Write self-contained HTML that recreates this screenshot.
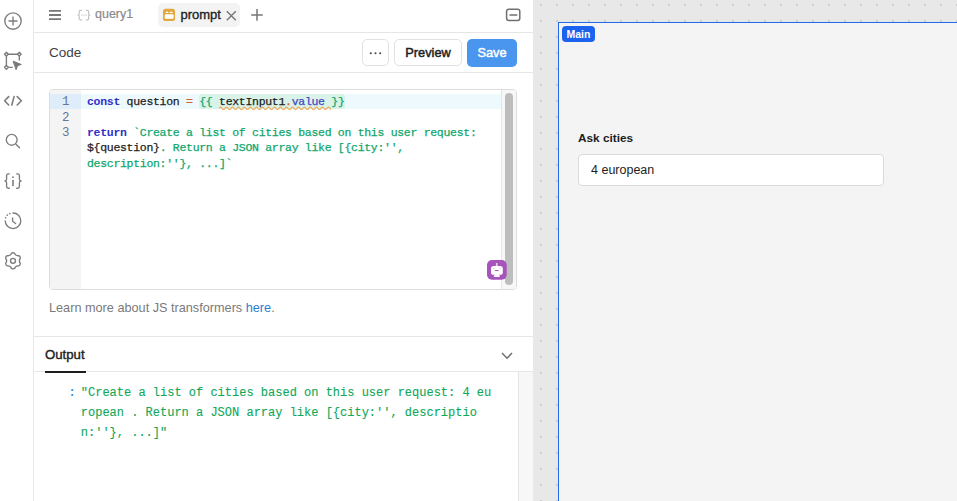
<!DOCTYPE html>
<html><head><meta charset="utf-8">
<style>
*{box-sizing:border-box;margin:0;padding:0}
html,body{width:957px;height:501px;overflow:hidden;background:#fff;font-family:"Liberation Sans",sans-serif;color:#1d1d1d}
.abs{position:absolute}
svg{position:absolute;overflow:visible}
#side{left:0;top:0;width:34px;height:501px;border-right:1px solid #e6e6e6;background:#fff}
#panel{left:34px;top:0;width:499px;height:501px;background:#fff}
#canvas{left:533px;top:0;width:424px;height:501px;background-color:#e8e8e8;
 background-image:radial-gradient(circle at 8px 5px,#cdcdcd 0.9px,transparent 1.3px);background-size:16px 16px;background-position:0 0}
.mono{font-family:"Liberation Mono",monospace}
.code{position:absolute;left:53px;font-family:"Liberation Mono",monospace;font-size:11.5px;letter-spacing:-0.3px;line-height:15.5px;white-space:pre;color:#1d1d1d;-webkit-text-stroke:0.25px currentColor}
.kw{color:#3030c8;font-weight:bold;-webkit-text-stroke:0}
.op{color:#d2622a}
.str{color:#0ea66c}
.tpl{color:#0ea66c}
.prop{color:#4646c4}
.out{position:absolute;font-family:"Liberation Mono",monospace;font-size:12px;line-height:20px;white-space:pre;color:#10a858;-webkit-text-stroke:0.12px currentColor}
</style></head><body>
<div id="side" class="abs">
  <svg width="34" height="280" style="left:0;top:0" fill="none" stroke="#7c7c7c" stroke-width="1.35" stroke-linecap="round" stroke-linejoin="round">
    <!-- plus circle -->
    <circle cx="13" cy="21" r="8.2"/>
    <path d="M9 21H17M13 17V25"/>
    <!-- select area -->
    <path d="M6.4 54.2H19.3M6.4 54.2V67.3M19.3 54.2V60M6.4 67.3H12.3"/>
    <path d="M6.4 52.3L8.3 54.2L6.4 56.1L4.5 54.2Z" fill="#fff"/>
    <path d="M19.3 52.3L21.2 54.2L19.3 56.1L17.4 54.2Z" fill="#fff"/>
    <path d="M6.4 65.4L8.3 67.3L6.4 69.2L4.5 67.3Z" fill="#fff"/>
    <path d="M13.4 61.3L21.3 64.5L17.6 65.6L16.2 69.4Z" fill="#777" stroke-width="1"/>
    <!-- code -->
    <path d="M8.7 96.6L4.6 100.8L8.7 105M14.1 96.6L11.8 105M17.2 96.6L21.3 100.8L17.2 105" stroke-width="1.6"/>
    <!-- search -->
    <circle cx="11.7" cy="139.8" r="5.4"/>
    <path d="M16 144.2L19.5 147.7"/>
    <!-- {i} -->
    <path d="M9.3 173.8H8.3C7.2 173.8 6.6 174.4 6.6 175.5V179.3C6.6 180.2 6 180.8 4.9 181C6 181.2 6.6 181.8 6.6 182.7V186.5C6.6 187.6 7.2 188.2 8.3 188.2H9.3"/>
    <path d="M16.7 173.8H17.7C18.8 173.8 19.4 174.4 19.4 175.5V179.3C19.4 180.2 20 180.8 21.1 181C20 181.2 19.4 181.8 19.4 182.7V186.5C19.4 187.6 18.8 188.2 17.7 188.2H16.7"/>
    <path d="M13 180.5V185.5" stroke-width="1.6"/>
    <circle cx="13" cy="177.2" r="0.9" fill="#777" stroke="none"/>
    <!-- history -->
    <path d="M13 213A7.8 7.8 0 1 1 5.2 220.8"/>
    <path d="M5.6 217.8L5.7 217.6M7.2 215.2L7.4 215M9.7 213.6L9.9 213.5" stroke-width="1.5"/>
    <path d="M12.6 218V221.3L15.6 223.5"/>
    <!-- gear -->
    <path d="M11.53 253.15 Q13.00 252.30 14.47 253.15 Q15.68 256.16 18.89 255.70 Q20.36 256.55 20.36 258.25 Q18.36 260.80 20.36 263.35 Q20.36 265.05 18.89 265.90 Q15.68 265.44 14.47 268.45 Q13.00 269.30 11.53 268.45 Q10.32 265.44 7.11 265.90 Q5.64 265.05 5.64 263.35 Q7.64 260.80 5.64 258.25 Q5.64 256.55 7.11 255.70 Q10.32 256.16 11.53 253.15Z"/>
    <circle cx="13" cy="260.8" r="2.5"/>
  </svg>
</div>
<div id="panel" class="abs">
  <!-- tabs row -->
  <svg width="499" height="32" style="left:0;top:0" fill="none" stroke="#6f6f6f" stroke-width="1.5" stroke-linecap="round">
    <path d="M15 10.8H27M15 15H27M15 19.2H27" stroke-linecap="butt" stroke-width="1.8" stroke="#777"/>
    <!-- query icon -->
    <g stroke="#c4c4c4" stroke-width="1.2">
      <path d="M47.6 10.3H46.4C45.6 10.3 45.2 10.7 45.2 11.5V13.9C45.2 14.5 44.8 15 43.6 15.1C44.8 15.2 45.2 15.7 45.2 16.3V18.7C45.2 19.5 45.6 19.9 46.4 19.9H47.6"/>
      <path d="M52.2 10.3H53.4C54.2 10.3 54.6 10.7 54.6 11.5V13.9C54.6 14.5 55 15 56.2 15.1C55 15.2 54.6 15.7 54.6 16.3V18.7C54.6 19.5 54.2 19.9 53.4 19.9H52.2"/>
      <path d="M47.8 15.1H47.9M50 15.1H50.1M52.2 15.1H52.3" stroke-width="1.4"/>
    </g>
    <!-- minimize -->
    <rect x="472.6" y="9.3" width="13.2" height="11.2" rx="2.2" stroke="#707070" stroke-width="1.5"/>
    <path d="M476 15H482.8" stroke="#707070" stroke-width="1.5"/>
  </svg>
  <div class="abs" style="left:61px;top:7px;font-size:12.5px;color:#8a8a8a;-webkit-text-stroke:0.2px #8a8a8a">query1</div>
  <div class="abs" style="left:124px;top:3px;width:82px;height:24px;background:#f3f3f3;border-radius:5px"></div>
  <svg width="60" height="32" style="left:124px;top:0">
    <rect x="5" y="8.8" width="12" height="12.2" rx="2.6" fill="#e3a83d"/>
    <rect x="6.7" y="14.3" width="8.9" height="4.4" rx="0.8" fill="#fff"/>
    <path d="M8.2 12.3H10M12.3 12.3H14.1" stroke="#fff" stroke-width="1.2" stroke-linecap="round"/>
  </svg>
  <div class="abs" style="left:146.5px;top:7px;font-size:13px;color:#222;-webkit-text-stroke:0.35px #222">prompt</div>
  <svg width="40" height="32" style="left:190px;top:0" fill="none" stroke="#777" stroke-width="1.4">
    <path d="M2.8 11.2L11.8 20.2M11.8 11.2L2.8 20.2"/>
    <path d="M27.2 14.9H38.8M33 9.1V20.7" stroke-width="1.5"/>
  </svg>
  <div class="abs" style="left:0;top:32px;width:499px;height:1px;background:#e6e6e6"></div>
  <!-- code header -->
  <div class="abs" style="left:15px;top:45px;font-size:13.5px;color:#3f3f3f">Code</div>
  <div class="abs" style="left:328px;top:39px;width:27px;height:27px;border:1px solid #e2e2e2;border-radius:5px"></div>
  <svg width="27" height="27" style="left:328px;top:39px"><circle cx="8.8" cy="14.2" r="1.05" fill="#4a4a4a"/><circle cx="13.5" cy="14.2" r="1.05" fill="#4a4a4a"/><circle cx="18.2" cy="14.2" r="1.05" fill="#4a4a4a"/></svg>
  <div class="abs" style="left:360px;top:39px;width:68px;height:27px;border:1px solid #e2e2e2;border-radius:5px;font-size:12.8px;line-height:26.5px;text-align:center;color:#1d1d1d;-webkit-text-stroke:0.45px #1d1d1d">Preview</div>
  <div class="abs" style="left:433px;top:39px;width:50px;height:28px;background:#4a96ef;border-radius:5px;font-size:12.8px;line-height:28px;text-align:center;color:#fff;-webkit-text-stroke:0.45px #fff">Save</div>
  <div class="abs" style="left:0;top:72px;width:499px;height:1px;background:#e6e6e6"></div>
  <!-- editor -->
  <div class="abs" style="left:15px;top:89px;width:468px;height:201px;border:1px solid #dcdcdc;border-radius:4px;background:#fff;overflow:hidden">
    <div class="abs" style="left:0;top:0;width:31px;height:201px;background:#f4f4f4"></div>
    <div class="abs" style="left:0;top:4px;width:31px;height:15px;background:#dfedfb"></div>
    <div class="abs" style="left:31px;top:4px;width:420px;height:15px;background:#eef9fe"></div>
    <div class="abs" style="left:451px;top:0;width:16px;height:201px;background:#f7f7f7;border-left:1px solid #e6e6e6"></div>
    <div class="abs" style="left:455px;top:3px;width:8px;height:192px;background:#bdbdbd;border-radius:4px"></div>
  </div>
  <div class="abs mono" style="left:14.5px;top:95px;width:21px;text-align:right;font-size:12.5px;line-height:15.5px;color:#667891;white-space:pre">1
2
3</div>
  <div class="abs" style="left:165px;top:94px;width:146px;height:14.5px;background:#d9f3e8;border-radius:3px"></div>
  <svg width="112" height="5" style="left:185px;top:106px;overflow:hidden"><path d="M0 2.3 Q1.5 -0.2 3.0 2.3 Q4.5 4.6 6.0 2.3 Q7.5 -0.2 9.0 2.3 Q10.5 4.6 12.0 2.3 Q13.5 -0.2 15.0 2.3 Q16.5 4.6 18.0 2.3 Q19.5 -0.2 21.0 2.3 Q22.5 4.6 24.0 2.3 Q25.5 -0.2 27.0 2.3 Q28.5 4.6 30.0 2.3 Q31.5 -0.2 33.0 2.3 Q34.5 4.6 36.0 2.3 Q37.5 -0.2 39.0 2.3 Q40.5 4.6 42.0 2.3 Q43.5 -0.2 45.0 2.3 Q46.5 4.6 48.0 2.3 Q49.5 -0.2 51.0 2.3 Q52.5 4.6 54.0 2.3 Q55.5 -0.2 57.0 2.3 Q58.5 4.6 60.0 2.3 Q61.5 -0.2 63.0 2.3 Q64.5 4.6 66.0 2.3 Q67.5 -0.2 69.0 2.3 Q70.5 4.6 72.0 2.3 Q73.5 -0.2 75.0 2.3 Q76.5 4.6 78.0 2.3 Q79.5 -0.2 81.0 2.3 Q82.5 4.6 84.0 2.3 Q85.5 -0.2 87.0 2.3 Q88.5 4.6 90.0 2.3 Q91.5 -0.2 93.0 2.3 Q94.5 4.6 96.0 2.3 Q97.5 -0.2 99.0 2.3 Q100.5 4.6 102.0 2.3 Q103.5 -0.2 105.0 2.3 Q106.5 4.6 108.0 2.3 Q109.5 -0.2 111.0 2.3 Q112.5 4.6 114.0 2.3" fill="none" stroke="#f3a451" stroke-width="1.2"/></svg>
  <div class="code" style="top:93.8px"><span class="kw">const</span> question <span class="op">=</span> <span class="tpl">{{</span> textInput1<span class="op">.</span><span class="prop">value</span> <span class="tpl">}}</span>

<span class="kw">return</span> <span class="str">`Create a list of cities based on this user request:</span>
${question}<span class="str">. Return a JSON array like [{city:'',</span>
<span class="str">description:''}, ...]`</span></div>
  <!-- robot -->
  <svg width="20" height="20" style="left:453.2px;top:260px">
    <rect x="0" y="0" width="19.7" height="19.8" rx="5" fill="#a852bc"/>
    <rect x="8.9" y="3" width="1.7" height="3.2" fill="#e6cdee"/>
    <rect x="4" y="5.9" width="11.8" height="8.9" rx="2.6" fill="#fff"/>
    <rect x="7.7" y="14" width="4.3" height="1.6" fill="#fff"/>
    <rect x="6.9" y="15.2" width="5.8" height="1.8" fill="#fff"/>
    <path d="M6.1 7.9L6.9 8.8M13.5 7.9L12.7 8.8" stroke="#c9a0d8" stroke-width="0.9"/>
    <path d="M7.9 10.5H11.6" stroke="#a852bc" stroke-width="1"/>
  </svg>
  <div class="abs" style="left:15px;top:300.5px;font-size:12.7px;color:#7a7a7a">Learn more about JS transformers <span style="color:#2d80d2">here</span>.</div>
  <div class="abs" style="left:0;top:336px;width:499px;height:1px;background:#e6e6e6"></div>
  <div class="abs" style="left:11px;top:347px;font-size:13.2px;color:#1d1d1d;-webkit-text-stroke:0.4px #1d1d1d">Output</div>
  <svg width="16" height="10" style="left:467px;top:350.6px" fill="none" stroke="#6f6f6f" stroke-width="1.5"><path d="M1 2L6 7.2L11 2"/></svg>
  <div class="abs" style="left:0;top:371px;width:499px;height:1px;background:#e6e6e6"></div>
  <div class="abs" style="left:11px;top:371px;width:41px;height:1.6px;background:#1d1d1d"></div>
  <!-- output -->
  <div class="abs" style="left:484px;top:372px;width:15px;height:129px;background:#f7f7f7;border-left:1px solid #e6e6e6"></div>
  <div class="out" style="left:34.5px;top:382.5px"><span style="color:#1d86d6">:</span></div>
  <div class="out" style="left:46.8px;top:382.5px">"Create a list of cities based on this user request: 4 eu
ropean . Return a JSON array like [{city:'', descriptio
n:''}, ...]"</div>
</div>
<div id="canvas" class="abs">
  <div class="abs" style="left:25px;top:22px;width:420px;height:490px;border:1.5px solid #2268ee;background:#f4f4f4"></div>
  <div class="abs" style="left:29px;top:25.7px;width:33px;height:16.3px;background:#1b62ee;border-radius:4px;color:#fff;font-size:10.5px;font-weight:bold;line-height:16px;text-align:center">Main</div>
  <div class="abs" style="left:45px;top:130.8px;font-size:11.8px;font-weight:bold;color:#1d1d1d">Ask cities</div>
  <div class="abs" style="left:45px;top:154px;width:306px;height:31.5px;background:#fff;border:1px solid #dadada;border-radius:4px"></div>
  <div class="abs" style="left:58px;top:162.8px;font-size:12.5px;color:#1d1d1d">4 european</div>
</div>
</body></html>
